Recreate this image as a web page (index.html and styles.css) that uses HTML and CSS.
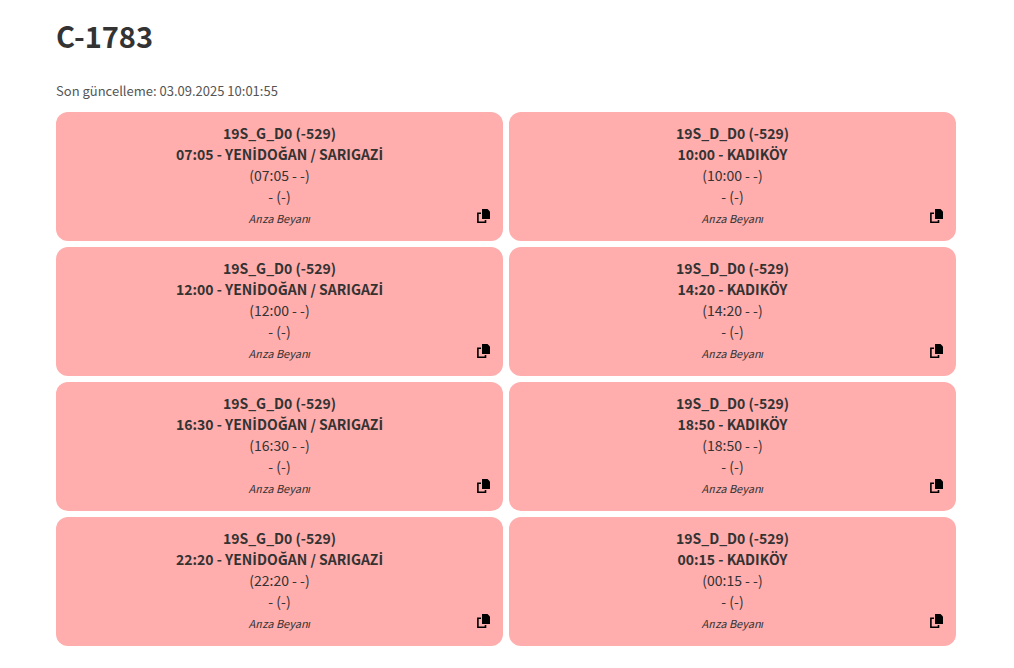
FILE: index.html
```html
<!DOCTYPE html>
<html lang="tr">
<head>
<meta charset="utf-8">
<meta name="viewport" content="width=device-width, initial-scale=1">
<title>C-1783</title>
<link rel="stylesheet" href="styles.css">
</head>
<body>
<svg class="sprite" aria-hidden="true">
  <symbol id="copy" viewBox="0 0 14 14">
    <path d="M5 0h5.500l2.500 2.500V10H5z"/>
    <path d="M4 4.250H.900V13.200H8.500V11" fill="none" stroke="currentColor" stroke-width="1.600"/>
  </symbol>
</svg>
<main class="page">
  <h1 class="title">C-1783</h1>
  <p class="updated">Son güncelleme: 03.09.2025 10:01:55</p>
  <section class="trips">
    <article class="trip">
      <p class="strong">19S_G_D0 (-529)</p>
      <p class="strong">07:05 - YEN<span class="dotted">İ</span>DOĞAN / SARIGAZ<span class="dotted">İ</span></p>
      <p>(07:05 - -)</p>
      <p>- (-)</p>
      <p class="note">Arıza Beyanı</p>
      <button class="copy" type="button" aria-label="Kopyala"><svg><use href="#copy"/></svg></button>
    </article>
    <article class="trip">
      <p class="strong">19S_D_D0 (-529)</p>
      <p class="strong">10:00 - KADIKÖY</p>
      <p>(10:00 - -)</p>
      <p>- (-)</p>
      <p class="note">Arıza Beyanı</p>
      <button class="copy" type="button" aria-label="Kopyala"><svg><use href="#copy"/></svg></button>
    </article>
    <article class="trip">
      <p class="strong">19S_G_D0 (-529)</p>
      <p class="strong">12:00 - YEN<span class="dotted">İ</span>DOĞAN / SARIGAZ<span class="dotted">İ</span></p>
      <p>(12:00 - -)</p>
      <p>- (-)</p>
      <p class="note">Arıza Beyanı</p>
      <button class="copy" type="button" aria-label="Kopyala"><svg><use href="#copy"/></svg></button>
    </article>
    <article class="trip">
      <p class="strong">19S_D_D0 (-529)</p>
      <p class="strong">14:20 - KADIKÖY</p>
      <p>(14:20 - -)</p>
      <p>- (-)</p>
      <p class="note">Arıza Beyanı</p>
      <button class="copy" type="button" aria-label="Kopyala"><svg><use href="#copy"/></svg></button>
    </article>
    <article class="trip">
      <p class="strong">19S_G_D0 (-529)</p>
      <p class="strong">16:30 - YEN<span class="dotted">İ</span>DOĞAN / SARIGAZ<span class="dotted">İ</span></p>
      <p>(16:30 - -)</p>
      <p>- (-)</p>
      <p class="note">Arıza Beyanı</p>
      <button class="copy" type="button" aria-label="Kopyala"><svg><use href="#copy"/></svg></button>
    </article>
    <article class="trip">
      <p class="strong">19S_D_D0 (-529)</p>
      <p class="strong">18:50 - KADIKÖY</p>
      <p>(18:50 - -)</p>
      <p>- (-)</p>
      <p class="note">Arıza Beyanı</p>
      <button class="copy" type="button" aria-label="Kopyala"><svg><use href="#copy"/></svg></button>
    </article>
    <article class="trip">
      <p class="strong">19S_G_D0 (-529)</p>
      <p class="strong">22:20 - YEN<span class="dotted">İ</span>DOĞAN / SARIGAZ<span class="dotted">İ</span></p>
      <p>(22:20 - -)</p>
      <p>- (-)</p>
      <p class="note">Arıza Beyanı</p>
      <button class="copy" type="button" aria-label="Kopyala"><svg><use href="#copy"/></svg></button>
    </article>
    <article class="trip">
      <p class="strong">19S_D_D0 (-529)</p>
      <p class="strong">00:15 - KADIKÖY</p>
      <p>(00:15 - -)</p>
      <p>- (-)</p>
      <p class="note">Arıza Beyanı</p>
      <button class="copy" type="button" aria-label="Kopyala"><svg><use href="#copy"/></svg></button>
    </article>
  </section>
</main>
</body>
</html>
```

FILE: styles.css
```css
* {
  box-sizing: border-box;
}

body {
  margin: 0;
  background: #fff;
  color: #333;
  font-family: "Source Sans Pro", "Noto Sans CJK SC", "Noto Sans", sans-serif;
  font-size: 14px;
  line-height: 21px;
}

p {
  margin: 0;
}

.sprite {
  display: none;
}

.page {
  max-width: 1200px;
  margin: 0 auto;
  padding: 16px 58px 16px 56px;
}

.title {
  margin: 0 0 25px;
  font-size: 29px;
  line-height: 39px;
}

.updated {
  margin-bottom: 10px;
  color: #555;
  font-size: 13px;
  line-height: 22px;
}

.trips {
  display: grid;
  grid-template-columns: 1fr 1fr;
  gap: 6px;
}

.trip {
  position: relative;
  padding: 11px 16px 12px;
  border-radius: 12px;
  background: #ffadad;
  text-align: center;
}

.strong {
  font-weight: 700;
}

.dotted {
  font-family: "Open Sans", "Noto Sans", sans-serif;
  font-size: 14px;
  line-height: 1;
}

.note {
  font-size: 11px;
  font-style: italic;
  line-height: 22px;
}

.copy {
  position: absolute;
  right: 12px;
  bottom: 18px;
  padding: 0;
  border: 0;
  background: none;
  color: #000;
  cursor: pointer;
}

.copy svg {
  display: block;
  width: 14px;
  height: 14px;
}
```
